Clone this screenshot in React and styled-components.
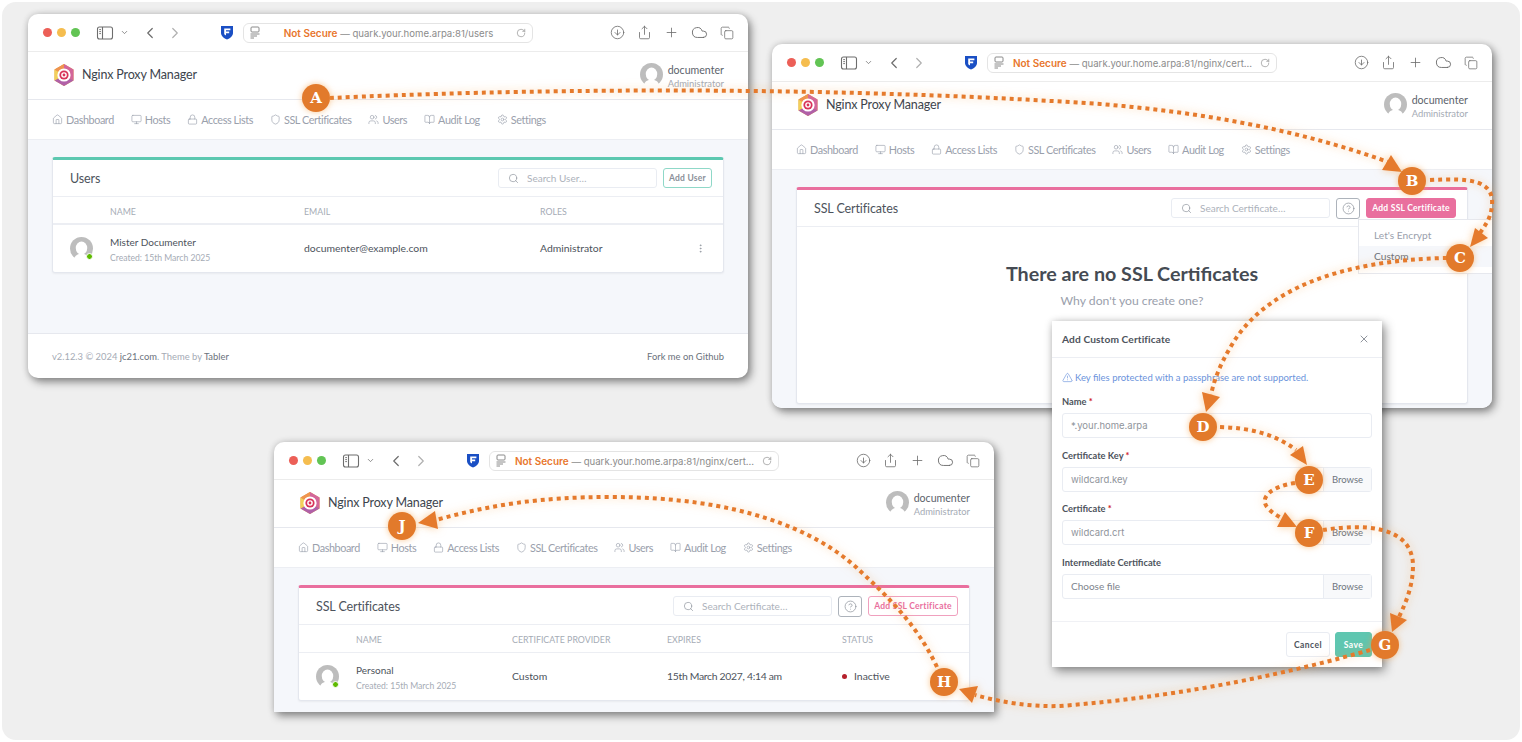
import React from 'react';
import styled, { createGlobalStyle } from 'styled-components';
import {
    House, Monitor, Lock, Shield, Users, BookOpen, Settings, Search, CircleHelp,
    TriangleAlert, X, EllipsisVertical, CircleArrowDown, Share, Plus, Cloud, Copy,
    ChevronDown, ChevronLeft, ChevronRight, RotateCw,
} from 'lucide-react';

const UI_FONT = `Lato, "Noto Sans", sans-serif`;
const SYS_FONT = `Inter, "Liberation Sans", sans-serif`;

const GlobalStyle = createGlobalStyle`
    html, body {
        margin: 0;
        padding: 0;
        background: #fff;
        font-family: ${UI_FONT};
    }
    * {
        box-sizing: border-box;
    }
`;

const Desktop = styled.div`
    position: relative;
    width: 1518px;
    height: 738px;
    margin: 2px;
    border-radius: 14px;
    background: #efefef;
    overflow: hidden;
`;

const Canvas = styled.div`
    position: absolute;
    left: -2px;
    top: -2px;
    width: 1522px;
    height: 742px;
`;

const Window = styled.div`
    position: absolute;
    left: ${p => p.$x}px;
    top: ${p => p.$y}px;
    width: 720px;
    height: ${p => p.$h}px;
    display: flex;
    flex-direction: column;
    background: #fff;
    border-radius: ${p => (p.$open ? '10px 10px 0 0' : '10px')};
    overflow: hidden;
    box-shadow: 3px 4px 9px rgba(0, 0, 0, 0.42), 0 0 7px rgba(0, 0, 0, 0.14);
`;

const Chrome = styled.div`
    flex: 0 0 38px;
    display: flex;
    align-items: center;
    padding: 0 14px 0 15px;
    border-bottom: 1px solid #ececec;
    color: #6d6d6d;
`;

const Lights = styled.div`
    display: flex;
    gap: 5px;
    margin-right: 16px;
`;

const Light = styled.span`
    width: 9px;
    height: 9px;
    border-radius: 50%;
    background: ${p => p.$color};
`;

const ChromeIcons = styled.div`
    display: flex;
    align-items: center;
    gap: ${p => p.$gap}px;
    margin: ${p => p.$margin || 0};
`;

const AddressBar = styled.div`
    width: 290px;
    height: 20px;
    margin-left: 9px;
    padding: 0 6px 0 5px;
    display: flex;
    align-items: center;
    border: 1px solid #e4e4e4;
    border-radius: 6px;
    color: #808080;
`;

const AddressText = styled.div`
    flex: 1;
    text-align: center;
    font-family: ${SYS_FONT};
    font-size: 9.6px;
    white-space: nowrap;
    color: #8b8b8b;
`;

const NotSecure = styled.strong`
    color: #e8762c;
    font-size: 10px;
    font-weight: 600;
`;

const AppHeader = styled.div`
    flex: 0 0 48px;
    display: flex;
    align-items: center;
    justify-content: space-between;
    padding: 0 24px 2px 25px;
    border-bottom: 1px solid #e6e8ee;
`;

const Brand = styled.div`
    display: flex;
    align-items: center;
    gap: 7px;
    font-size: 12.5px;
    letter-spacing: -0.15px;
    color: #3d444d;
`;

const UserBox = styled.div`
    display: flex;
    align-items: center;
    gap: 5px;
`;

const UserText = styled.div`
    display: flex;
    flex-direction: column;
    padding-top: 5px;
    line-height: 13.5px;
`;

const UserName = styled.span`
    font-size: 10.6px;
    color: #5c626b;
`;

const UserRole = styled.span`
    font-size: 9.4px;
    color: #a5abb5;
`;

const Nav = styled.div`
    flex: 0 0 39px;
    display: flex;
    align-items: center;
    gap: 17px;
    padding: 0 24px;
    font-size: 10.8px;
    letter-spacing: -0.4px;
    color: #9aa0ac;
`;

const NavItem = styled.span`
    display: flex;
    align-items: center;
    gap: 3px;
    white-space: nowrap;
`;

const Content = styled.div`
    flex: 1;
    padding: 17px 24px 0;
    background: #f5f7fb;
    border-top: 1px solid #eceef3;
`;

const Footer = styled.div`
    flex: 0 0 45px;
    display: flex;
    align-items: center;
    justify-content: space-between;
    padding: 0 24px;
    border-top: 1px solid #e6e8ee;
    font-size: 9.4px;
    color: #a5abb5;
`;

const FooterLink = styled.span`
    color: #6b727c;
`;

const Card = styled.div`
    background: #fff;
    border: 1px solid #e4e7ee;
    border-top: 3px solid ${p => p.$accent};
    border-radius: 3px;
    box-shadow: 0 1px 2px rgba(0, 0, 0, 0.05);
`;

const CardHead = styled.div`
    height: 37px;
    display: flex;
    align-items: center;
    gap: 6px;
    padding: 0 11px 0 17px;
    border-bottom: 1px solid #eceef3;
`;

const CardTitle = styled.div`
    margin-right: auto;
    font-size: 12.5px;
    letter-spacing: -0.1px;
    color: #4d535c;
`;

const SearchBox = styled.div`
    width: 159px;
    height: 20px;
    display: flex;
    align-items: center;
    gap: 8px;
    padding-left: 9px;
    border: 1px solid #e9ecf2;
    border-radius: 3px;
    font-size: 10px;
    color: #adb2bb;
`;

const HelpButton = styled.div`
    width: 24px;
    height: 21px;
    display: flex;
    align-items: center;
    justify-content: center;
    border: 1px solid #adb3bb;
    border-radius: 3px;
    color: #8a9099;
`;

const HeadButton = styled.div`
    height: 20px;
    width: ${p => p.$w}px;
    display: flex;
    align-items: center;
    justify-content: center;
    border: 1px solid ${p => p.$color};
    border-radius: 3px;
    background: ${p => (p.$solid ? p.$color : '#fff')};
    color: ${p => (p.$solid ? '#fff' : p.$text || p.$color)};
    font-size: 8.5px;
    font-weight: 700;
    letter-spacing: 0.25px;
    white-space: nowrap;
`;

const TableRow = styled.div`
    display: grid;
    grid-template-columns: ${p => p.$cols};
    align-items: center;
    height: ${p => p.$h}px;
    padding: 0 0 1px 17px;
`;

const HeadRow = styled(TableRow)`
    padding-top: 2px;
    padding-bottom: 0;
    border-bottom: ${p => (p.$thick ? '2px' : '1px')} solid #eceef3;
    font-size: 8.8px;
    color: #a5abb5;
`;

const RowCell = styled.div`
    font-size: 10.4px;
    letter-spacing: ${p => (p.$tight ? '-0.3px' : 0)};
    color: #4d535c;
    white-space: nowrap;
`;

const CellMain = styled.div`
    margin-top: 3px;
    font-size: 10px;
    line-height: 14px;
    color: #4d535c;
`;

const CellSub = styled.div`
    margin-top: 3px;
    font-size: 8.6px;
    line-height: 13px;
    color: #a5abb5;
`;

const AvatarWrap = styled.div`
    position: relative;
    width: 23px;
    height: 23px;
`;

const OnlineDot = styled.span`
    position: absolute;
    right: 0;
    bottom: 0;
    width: 7px;
    height: 7px;
    border-radius: 50%;
    background: #5eba00;
    border: 1px solid #fff;
`;

const StatusDot = styled.span`
    display: inline-block;
    width: 5px;
    height: 5px;
    margin-right: 7px;
    vertical-align: 1px;
    border-radius: 50%;
    background: #b5202c;
`;

const EmptyState = styled.div`
    height: 176px;
    padding-top: 35px;
    text-align: center;
`;

const EmptyTitle = styled.div`
    font-size: 19.7px;
    font-weight: 700;
    line-height: 24px;
    color: #454b53;
`;

const EmptyText = styled.div`
    margin-top: 7px;
    font-size: 12.2px;
    color: #9aa0ac;
`;

const Dropdown = styled.div`
    position: absolute;
    left: 586px;
    top: 175px;
    width: 140px;
    height: 55px;
    padding-top: 5px;
    background: #fff;
    border: 1px solid #e6e8ee;
    font-size: 10.2px;
    color: #9aa0ac;
`;

const DropItem = styled.div`
    height: 21px;
    line-height: 21px;
    padding-left: 15px;
    background: ${p => (p.$active ? '#f5f7fb' : 'transparent')};
    color: ${p => (p.$active ? '#6b727c' : '#9aa0ac')};
`;

const Modal = styled.div`
    position: absolute;
    left: 1052px;
    top: 321px;
    width: 330px;
    height: 346px;
    display: flex;
    flex-direction: column;
    background: #fff;
    box-shadow: 3px 4px 10px rgba(0, 0, 0, 0.42), 0 0 6px rgba(0, 0, 0, 0.12);
`;

const ModalHead = styled.div`
    flex: 0 0 37px;
    display: flex;
    align-items: center;
    justify-content: space-between;
    padding: 0 12px 0 10px;
    border-bottom: 1px solid #eceef3;
    font-size: 10.2px;
    font-weight: 700;
    letter-spacing: 0.1px;
    color: #4d535c;
`;

const ModalBody = styled.div`
    flex: 1;
    padding: 12px 10px 0;
`;

const Notice = styled.div`
    display: flex;
    align-items: center;
    gap: 2px;
    height: 14px;
    margin-bottom: 12px;
    font-size: 9.5px;
    color: #6b93dc;
`;

const Field = styled.div`
    margin-bottom: ${p => (p.$last ? 0 : 11.67)}px;
`;

const Label = styled.div`
    height: 12px;
    line-height: 12px;
    margin-bottom: 5px;
    font-size: 9.3px;
    font-weight: 700;
    color: #4d535c;
`;

const Required = styled.span`
    color: #cd201f;
`;

const InputRow = styled.div`
    height: 25px;
    display: flex;
    align-items: center;
    border: 1px solid #e9ecf2;
    border-radius: 3px;
`;

const InputValue = styled.div`
    flex: 1;
    padding-left: 8px;
    font-family: ${p => (p.$plain ? UI_FONT : SYS_FONT)};
    font-size: ${p => (p.$plain ? 10 : 9.5)}px;
    color: ${p => (p.$plain ? '#7d838c' : '#8f949b')};
`;

const BrowseButton = styled.div`
    width: 48px;
    height: 100%;
    display: flex;
    align-items: center;
    justify-content: center;
    background: #f8f9fb;
    border-left: 1px solid #e9ecf2;
    font-size: 9.5px;
    color: #6f757e;
`;

const ModalFoot = styled.div`
    flex: 0 0 46px;
    display: flex;
    align-items: center;
    justify-content: flex-end;
    gap: 5px;
    padding: 0 10px;
    border-top: 1px solid #f0f1f5;
`;

const FootButton = styled.div`
    width: ${p => p.$w}px;
    height: 25px;
    display: flex;
    align-items: center;
    justify-content: center;
    border: 1px solid ${p => (p.$primary ? '#5fc6b0' : '#e9ecf2')};
    border-radius: 3px;
    background: ${p => (p.$primary ? '#5fc6b0' : '#fff')};
    color: ${p => (p.$primary ? '#fff' : '#4d535c')};
    font-size: 8.5px;
    font-weight: 700;
    letter-spacing: 0.4px;
`;

const Overlay = styled.svg`
    position: absolute;
    left: 0;
    top: 0;
    filter: drop-shadow(0 0 4px rgba(245, 160, 70, 0.55));
    pointer-events: none;
`;

const Badge = styled.div`
    position: absolute;
    left: ${p => p.$x - 14}px;
    top: ${p => p.$y - 14}px;
    width: 28px;
    height: 28px;
    display: flex;
    align-items: center;
    justify-content: center;
    border-radius: 50%;
    background: #e27a2b;
    box-shadow: 0 0 6px rgba(245, 160, 70, 0.6);
    color: #fff;
    font-family: "DejaVu Serif", "Liberation Serif", serif;
    font-size: 15px;
    font-weight: 700;
`;

const SidebarIcon = () => (
    <svg width="18" height="14" viewBox="0 0 18 14" fill="none" stroke="currentColor" strokeWidth="1.1">
        <rect x="1.5" y="1" width="15" height="12" rx="2" />
        <path d="M6.5 1 V13" />
        <path d="M3.2 3.6 H5 M3.2 5.6 H5 M3.2 7.6 H5" strokeWidth="0.9" />
    </svg>
);

const BitwardenIcon = () => (
    <svg width="14" height="15" viewBox="0 0 14 15">
        <path d="M1 1 H13 V8 C13 11 10 13.3 7 14.5 C4 13.3 1 11 1 8 Z" fill="#1a4fc4" />
        <path d="M4.2 3.6 H10.4 V5.3 H6 V6.6 H9.2 V8.2 H6 V10.4 L4.2 9.2 Z" fill="#fff" />
    </svg>
);

const SiteIcon = () => (
    <svg width="12" height="13" viewBox="0 0 12 13" fill="none" stroke="#8a8a8a" strokeWidth="1">
        <rect x="2" y="1" width="8" height="5" rx="1" />
        <path d="M1.5 8 H10.5 M1.5 10 H8 M1.5 12 H5" />
    </svg>
);

const NpmLogo = () => (
    <svg width="22" height="24" viewBox="0 0 22 24">
        <polygon points="11,1 20.5,6.5 20.5,17.5 11,23 1.5,17.5 1.5,6.5" fill="#e5a23d" />
        <polygon points="11,1 20.5,6.5 20.5,17.5 11,12" fill="#d3669a" />
        <polygon points="1.5,17.5 11,23 20.5,17.5 11,12" fill="#b060a8" />
        <polygon points="1.5,6.5 1.5,17.5 11,12" fill="#f2d05a" />
        <polygon points="11,1 1.5,6.5 11,12" fill="#ef9450" />
        <circle cx="11" cy="12" r="6.6" fill="#fff" />
        <circle cx="11" cy="12" r="4.6" fill="#d8335a" />
        <circle cx="11" cy="12" r="2.8" fill="#fff" />
        <circle cx="11" cy="12" r="1.4" fill="#d8335a" />
    </svg>
);

const AvatarImage = () => (
    <svg width="23" height="23" viewBox="0 0 24 24">
        <circle cx="12" cy="12" r="12" fill="#bdbdbd" />
        <ellipse cx="12" cy="11.5" rx="6" ry="6.8" fill="#fff" />
        <path d="M3.5 24 C5 19 8 17.6 12 17.6 C16 17.6 19 19 20.5 24 Z" fill="#fff" />
    </svg>
);

const Avatar = ({ online }) => (
    <AvatarWrap>
        <AvatarImage />
        {online && <OnlineDot />}
    </AvatarWrap>
);

const BrowserBar = ({ url }) => (
    <Chrome>
        <Lights>
            <Light $color="#ec5f57" />
            <Light $color="#f5bd4f" />
            <Light $color="#62c454" />
        </Lights>
        <ChromeIcons $gap={6}>
            <SidebarIcon />
            <ChevronDown size={9} strokeWidth={2} />
        </ChromeIcons>
        <ChromeIcons $gap={7} $margin="0 36px 0 12px">
            <ChevronLeft size={18} strokeWidth={1.6} />
            <ChevronRight size={18} strokeWidth={1.6} color="#b0b0b0" />
        </ChromeIcons>
        <BitwardenIcon />
        <AddressBar>
            <SiteIcon />
            <AddressText>
                <NotSecure>Not Secure</NotSecure> — {url}
            </AddressText>
            <RotateCw size={10} strokeWidth={1.4} />
        </AddressBar>
        <ChromeIcons $gap={12} $margin="0 0 0 auto">
            <CircleArrowDown size={15} strokeWidth={1.3} />
            <Share size={15} strokeWidth={1.3} />
            <Plus size={15} strokeWidth={1.3} />
            <Cloud size={17} strokeWidth={1.3} />
            <Copy size={14} strokeWidth={1.3} />
        </ChromeIcons>
    </Chrome>
);

const navItems = [
    ['Dashboard', House],
    ['Hosts', Monitor],
    ['Access Lists', Lock],
    ['SSL Certificates', Shield],
    ['Users', Users],
    ['Audit Log', BookOpen],
    ['Settings', Settings],
];

const AppTop = () => (
    <>
        <AppHeader>
            <Brand>
                <NpmLogo />
                Nginx Proxy Manager
            </Brand>
            <UserBox>
                <Avatar />
                <UserText>
                    <UserName>documenter</UserName>
                    <UserRole>Administrator</UserRole>
                </UserText>
            </UserBox>
        </AppHeader>
        <Nav>
            {navItems.map(([label, Icon]) => (
                <NavItem key={label}>
                    <Icon size={11} strokeWidth={1.4} />
                    {label}
                </NavItem>
            ))}
        </Nav>
    </>
);

const CertSearch = () => (
    <>
        <SearchBox>
            <Search size={11} strokeWidth={1.5} color="#8f959e" />
            Search Certificate…
        </SearchBox>
        <HelpButton>
            <CircleHelp size={13} strokeWidth={1.3} />
        </HelpButton>
    </>
);

const usersCols = '40px 194px 236px 1fr 28px';
const certCols = '40px 156px 155px 175px 1fr';

const UsersWindow = () => (
    <Window $x={28} $y={14} $h={364}>
        <BrowserBar url="quark.your.home.arpa:81/users" />
        <AppTop />
        <Content>
            <Card $accent="#5cc8b0">
                <CardHead>
                    <CardTitle>Users</CardTitle>
                    <SearchBox>
                        <Search size={11} strokeWidth={1.5} color="#8f959e" />
                        Search User…
                    </SearchBox>
                    <HeadButton $w={49} $color="#8fd8c8" $text="#8a9099">Add User</HeadButton>
                </CardHead>
                <HeadRow $cols={usersCols} $h={28} $thick>
                    <span />
                    <span>NAME</span>
                    <span>EMAIL</span>
                    <span>ROLES</span>
                </HeadRow>
                <TableRow $cols={usersCols} $h={47}>
                    <Avatar online />
                    <div>
                        <CellMain>Mister Documenter</CellMain>
                        <CellSub>Created: 15th March 2025</CellSub>
                    </div>
                    <RowCell>documenter@example.com</RowCell>
                    <RowCell>Administrator</RowCell>
                    <EllipsisVertical size={11} strokeWidth={1.5} color="#8a9099" />
                </TableRow>
            </Card>
        </Content>
        <Footer>
            <span>
                v2.12.3 © 2024 <FooterLink>jc21.com</FooterLink>. Theme by <FooterLink>Tabler</FooterLink>
            </span>
            <FooterLink>Fork me on Github</FooterLink>
        </Footer>
    </Window>
);

const EmptyCertsWindow = () => (
    <Window $x={772} $y={44} $h={364}>
        <BrowserBar url="quark.your.home.arpa:81/nginx/cert…" />
        <AppTop />
        <Content>
            <Card $accent="#e96f9e">
                <CardHead>
                    <CardTitle>SSL Certificates</CardTitle>
                    <CertSearch />
                    <HeadButton $w={90} $color="#e96f9e" $solid>Add SSL Certificate</HeadButton>
                </CardHead>
                <EmptyState>
                    <EmptyTitle>There are no SSL Certificates</EmptyTitle>
                    <EmptyText>Why don't you create one?</EmptyText>
                </EmptyState>
            </Card>
        </Content>
        <Dropdown>
            <DropItem>Let's Encrypt</DropItem>
            <DropItem $active>Custom</DropItem>
        </Dropdown>
    </Window>
);

const CertListWindow = () => (
    <Window $x={274} $y={442} $h={270} $open>
        <BrowserBar url="quark.your.home.arpa:81/nginx/cert…" />
        <AppTop />
        <Content>
            <Card $accent="#e96f9e">
                <CardHead>
                    <CardTitle>SSL Certificates</CardTitle>
                    <CertSearch />
                    <HeadButton $w={90} $color="#f0a0be" $text="#e96f9e">Add SSL Certificate</HeadButton>
                </CardHead>
                <HeadRow $cols={certCols} $h={28}>
                    <span />
                    <span>NAME</span>
                    <span>CERTIFICATE PROVIDER</span>
                    <span>EXPIRES</span>
                    <span>STATUS</span>
                </HeadRow>
                <TableRow $cols={certCols} $h={47}>
                    <Avatar online />
                    <div>
                        <CellMain>Personal</CellMain>
                        <CellSub>Created: 15th March 2025</CellSub>
                    </div>
                    <RowCell>Custom</RowCell>
                    <RowCell $tight>15th March 2027, 4:14 am</RowCell>
                    <RowCell><StatusDot />Inactive</RowCell>
                </TableRow>
            </Card>
        </Content>
    </Window>
);

const FileField = ({ label, value, required, plain, last }) => (
    <Field $last={last}>
        <Label>{label}{required && <Required> *</Required>}</Label>
        <InputRow>
            <InputValue $plain={plain}>{value}</InputValue>
            <BrowseButton>Browse</BrowseButton>
        </InputRow>
    </Field>
);

const CustomCertModal = () => (
    <Modal>
        <ModalHead>
            Add Custom Certificate
            <X size={12} strokeWidth={1.5} color="#6b727c" />
        </ModalHead>
        <ModalBody>
            <Notice>
                <TriangleAlert size={11} strokeWidth={1.4} />
                Key files protected with a passphrase are not supported.
            </Notice>
            <Field>
                <Label>Name<Required> *</Required></Label>
                <InputRow>
                    <InputValue>*.your.home.arpa</InputValue>
                </InputRow>
            </Field>
            <FileField label="Certificate Key" value="wildcard.key" required />
            <FileField label="Certificate" value="wildcard.crt" required />
            <FileField label="Intermediate Certificate" value="Choose file" plain last />
        </ModalBody>
        <ModalFoot>
            <FootButton $w={44}>Cancel</FootButton>
            <FootButton $w={37} $primary>Save</FootButton>
        </ModalFoot>
    </Modal>
);

const routes = [
    'M330 98 C500 90 800 84 1100 104 C1200 112 1300 130 1388 162',
    'M1430 180 C1470 178 1494 180 1492 205 C1491 218 1486 224 1480 233',
    'M1447 258 C1340 260 1262 290 1230 348 C1220 365 1214 380 1211 395',
    'M1220 427 C1250 428 1275 434 1296 450',
    'M1295 483 C1272 486 1258 498 1268 508 C1272 513 1278 516 1283 519',
    'M1323 530 C1360 524 1412 524 1413 565 C1413 585 1407 600 1399 617',
    'M1370 650 C1300 670 1190 696 1060 706 C1030 707 1000 702 975 695',
    'M937 667 C915 620 880 590 857 568 C815 530 740 497 610 497 C540 497 490 505 436 520',
];

const arrowHeads = [
    '1402,172 1382,170 1391,155',
    '1470,247 1475,228 1488,238',
    '1206,412 1202,392 1220,397',
    '1307,465 1303,446 1290,455',
    '1297,527 1285,512 1277,527',
    '1392,632 1390,613 1407,620',
    '959,689 978,686 972,703',
    '418,523 435,511 438,529',
];

const badges = [
    ['A', 316, 98],
    ['B', 1412, 181],
    ['C', 1460, 258],
    ['D', 1203, 427],
    ['E', 1309, 480],
    ['F', 1309, 533],
    ['G', 1385, 645],
    ['H', 944, 682],
    ['J', 402, 526],
];

const Annotations = () => (
    <>
        <Overlay width="1522" height="742" viewBox="0 0 1522 742">
            {routes.map(d => (
                <path key={d} d={d} fill="none" stroke="#e57a2c" strokeWidth="4" strokeDasharray="4 4" />
            ))}
            {arrowHeads.map(points => (
                <polygon key={points} points={points} fill="#e57a2c" />
            ))}
        </Overlay>
        {badges.map(([letter, x, y]) => (
            <Badge key={letter} $x={x} $y={y}>{letter}</Badge>
        ))}
    </>
);

export default function App() {
    return (
        <>
            <GlobalStyle />
            <Desktop>
                <Canvas>
                    <UsersWindow />
                    <EmptyCertsWindow />
                    <CertListWindow />
                    <CustomCertModal />
                    <Annotations />
                </Canvas>
            </Desktop>
        </>
    );
}
